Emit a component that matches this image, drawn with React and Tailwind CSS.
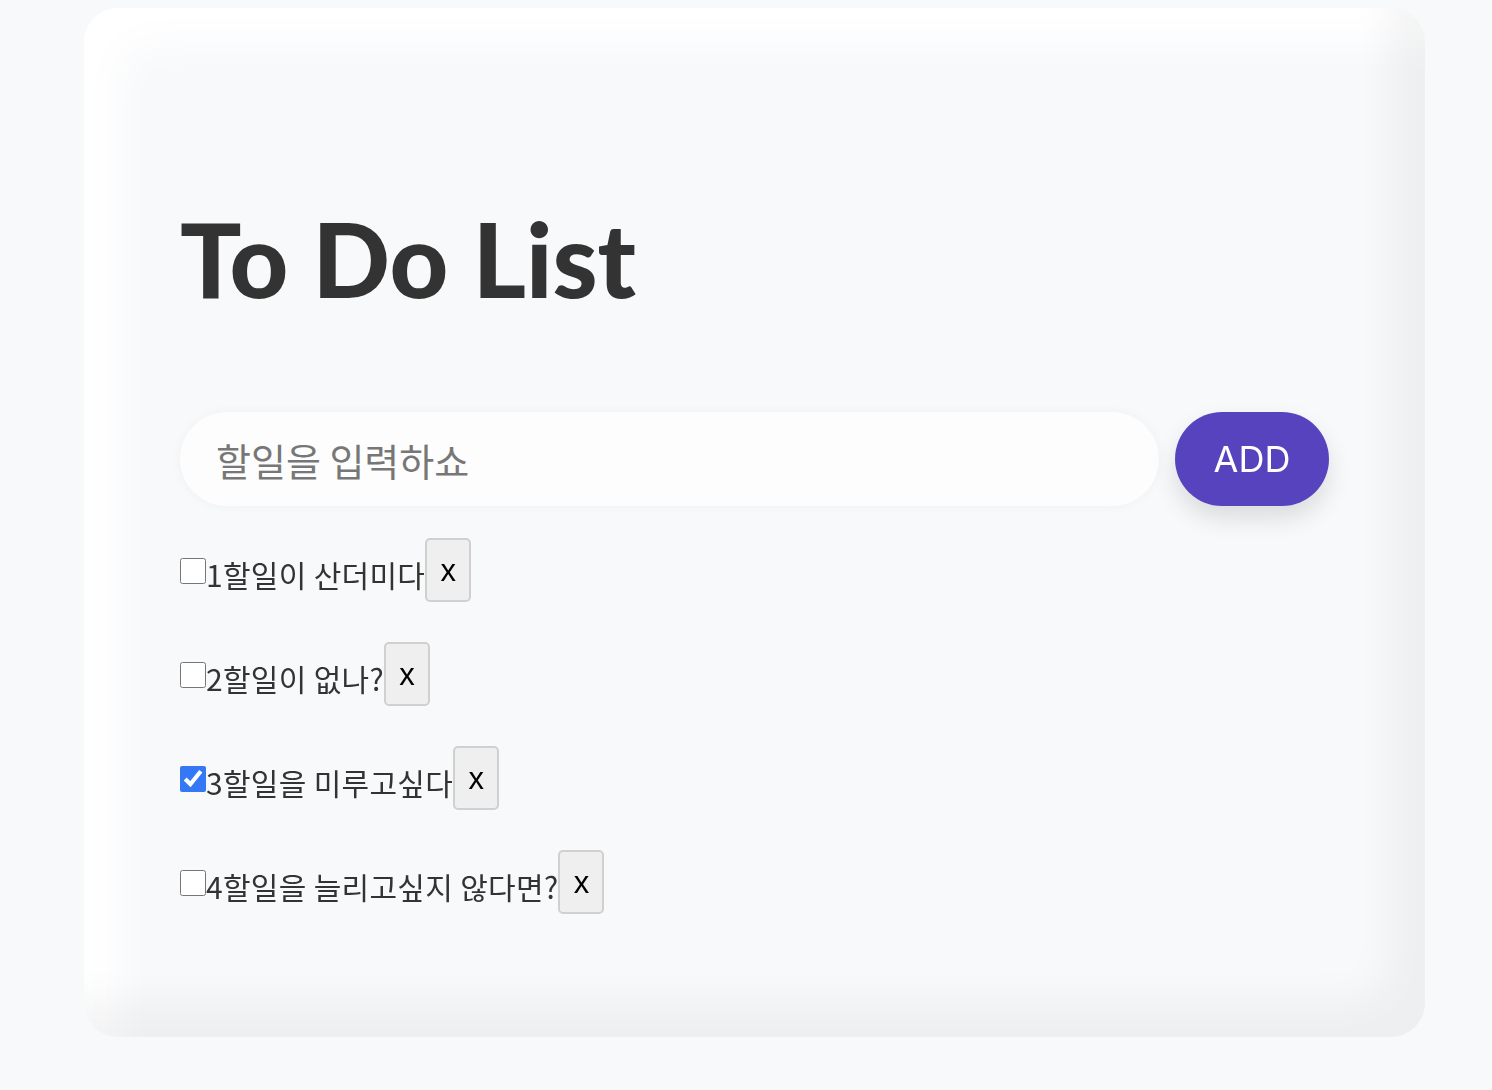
import { useState } from 'react';

const INITIAL = [
  { id: 1, text: '1할일이 산더미다', done: false },
  { id: 2, text: '2할일이 없나?', done: false },
  { id: 3, text: '3할일을 미루고싶다', done: true },
  { id: 4, text: '4할일을 늘리고싶지 않다면?', done: false },
];

function TodoItem({ item, onToggle, onRemove }) {
  return (
    <li className="flex items-center h-[64px]">
      <input
        type="checkbox"
        checked={item.done}
        onChange={() => onToggle(item.id)}
        className="m-0 mt-[2px] w-[26px] h-[26px] accent-[#3478f6]"
      />
      <span className="text-[30px] leading-none tracking-[0.3px] text-[#333] mt-[8px]">{item.text}</span>
      <button
        onClick={() => onRemove(item.id)}
        className="h-[64px] w-[46px] bg-[#efefef] border-2 border-[#d0d0d0] rounded-[5px] text-[31px] leading-none text-black font-['Liberation_Sans',sans-serif]"
      >
        x
      </button>
    </li>
  );
}

export default function App() {
  const [todos, setTodos] = useState(INITIAL);
  const [value, setValue] = useState('');

  const add = () => {
    if (!value.trim()) return;
    setTodos(t => [...t, { id: Date.now(), text: value, done: false }]);
    setValue('');
  };

  return (
    <div className="min-h-screen bg-[#f8f9fb] pt-[8px] pl-[84px] pr-[67px] font-['Noto_Sans_CJK_KR','Noto_Sans',sans-serif]">
      <div className="w-[1341px] h-[1029px] rounded-[34px] bg-[#f8f9fb] shadow-[inset_-36px_-36px_40px_rgba(0,0,0,0.045),inset_36px_36px_40px_rgba(255,255,255,0.95)] px-[96px] pt-[200px]">
        <h1 className="text-[102px] leading-none font-black text-[#333] font-['Lato',sans-serif]">
          To Do List
        </h1>

        <div className="flex gap-[16px] mt-[102px]">
          <input
            autoFocus
            value={value}
            onChange={e => setValue(e.target.value)}
            placeholder="할일을 입력하쇼"
            className="flex-1 h-[94px] rounded-full bg-[#fcfdfc] px-[36px] text-[38px] text-[#333] placeholder:text-[#777] outline-none shadow-[0_0_12px_rgba(0,0,0,0.04)]"
          />
          <button
            onClick={add}
            className="w-[154px] h-[94px] rounded-full bg-[#5843bf] text-white text-[36px] font-['Inter',sans-serif] shadow-[0_12px_24px_rgba(0,0,0,0.12)]"
          >
            ADD
          </button>
        </div>

        <ul className="mt-[32px] flex flex-col gap-[40px]">
          {todos.map(item => (
            <TodoItem
              key={item.id}
              item={item}
              onToggle={id => setTodos(t => t.map(x => (x.id === id ? { ...x, done: !x.done } : x)))}
              onRemove={id => setTodos(t => t.filter(x => x.id !== id))}
            />
          ))}
        </ul>
      </div>
    </div>
  );
}
